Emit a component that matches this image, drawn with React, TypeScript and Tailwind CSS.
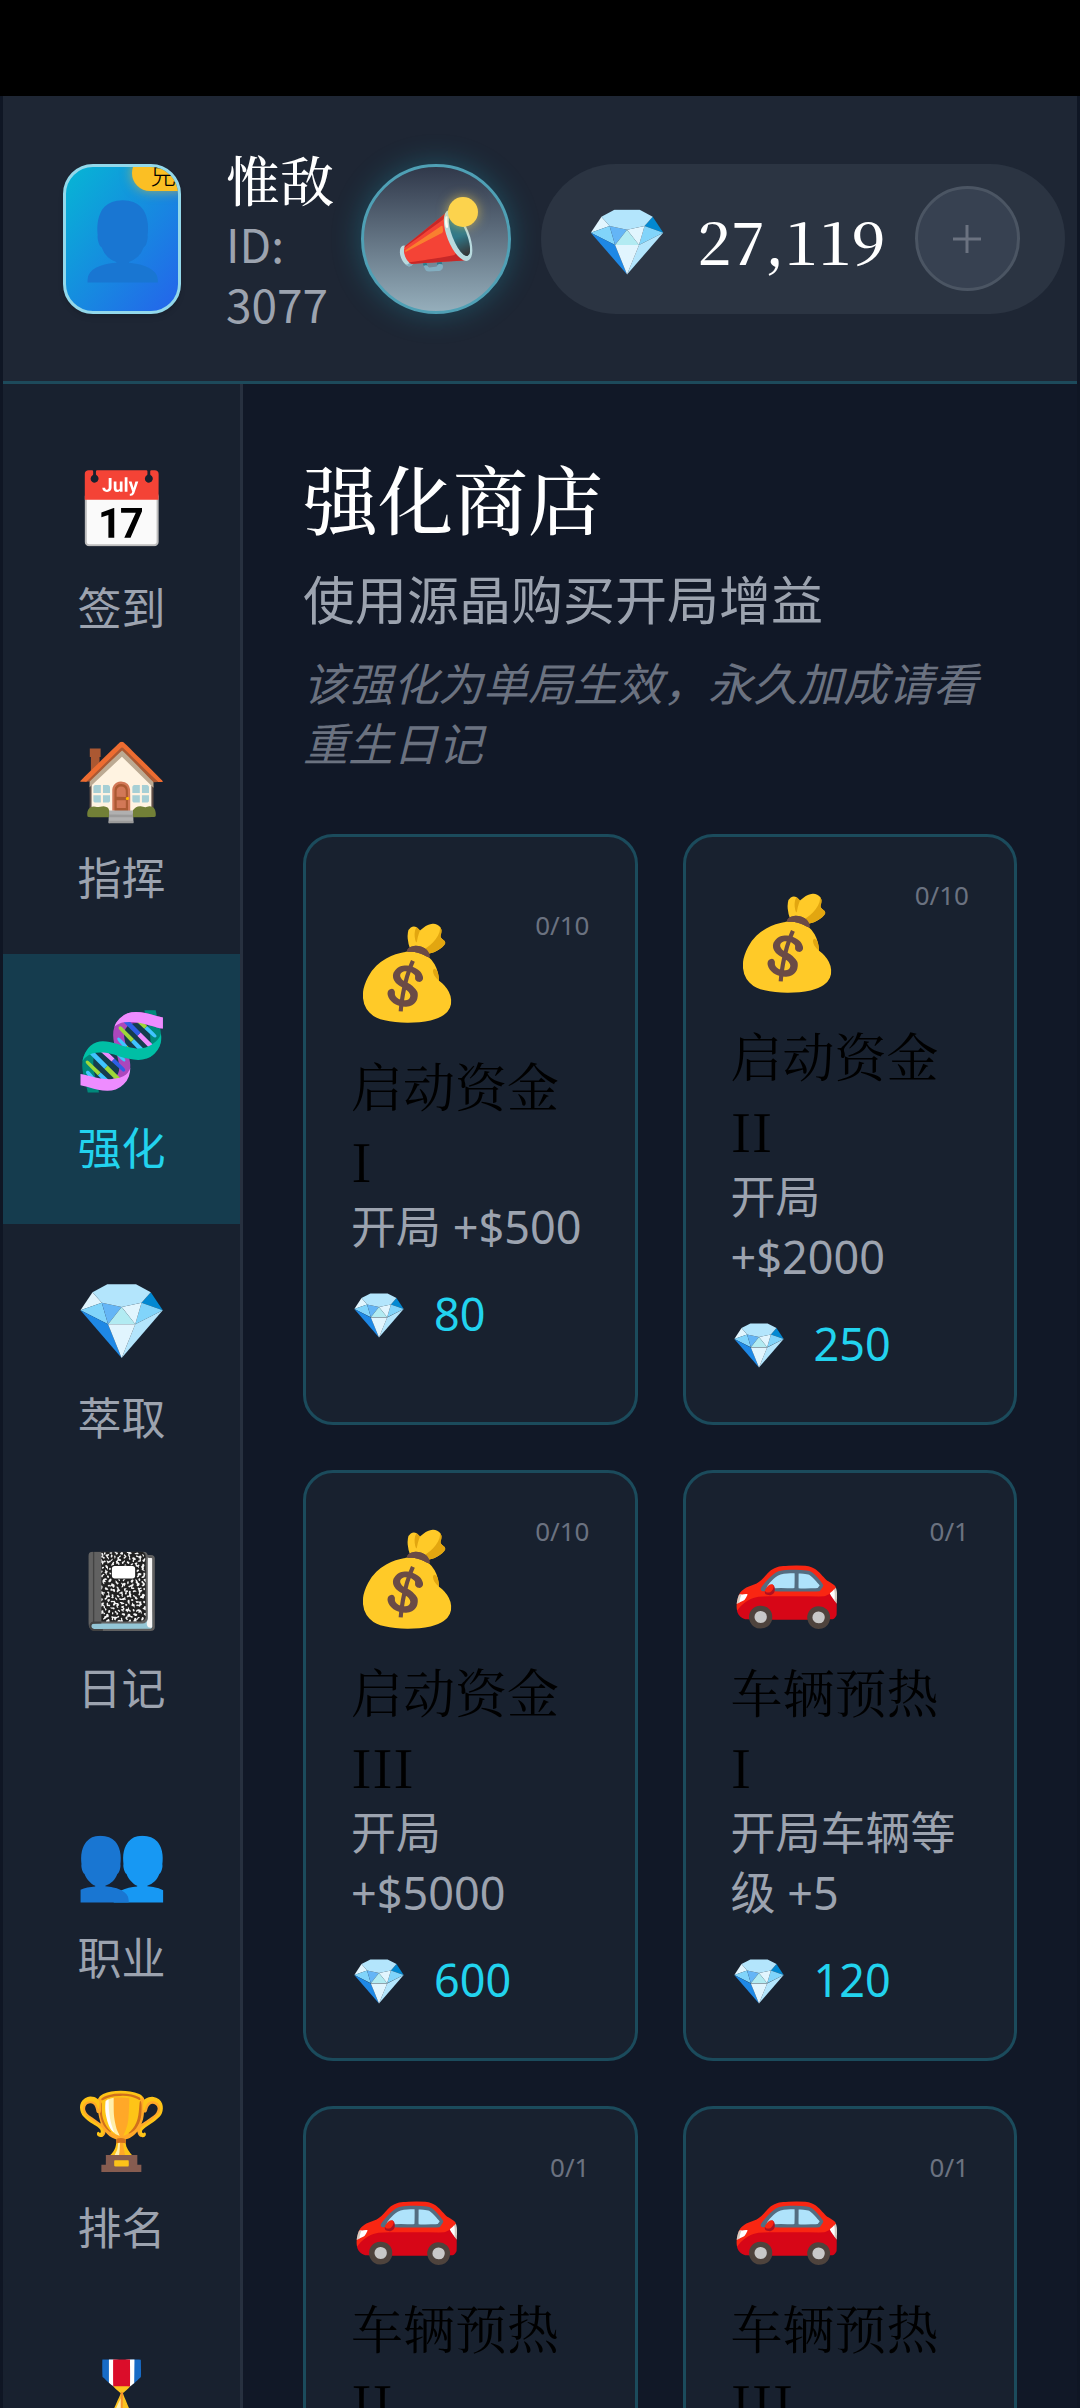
import React, { useState } from "react";

const navItems = [
  { key: "checkin", icon: "📅", label: "签到" },
  { key: "home", icon: "🏠", label: "指挥" },
  { key: "boost", icon: "🧬", label: "强化" },
  { key: "extract", icon: "💎", label: "萃取" },
  { key: "diary", icon: "📓", label: "日记" },
  { key: "job", icon: "👥", label: "职业" },
  { key: "rank", icon: "🏆", label: "排名" },
  { key: "honor", icon: "🎖️", label: "荣誉" },
];

const shopItems = [
  { icon: "💰", name: "启动资金 I", desc: "开局 +$500", price: 80, limit: "0/10" },
  { icon: "💰", name: "启动资金 II", desc: "开局 +$2000", price: 250, limit: "0/10" },
  { icon: "💰", name: "启动资金 III", desc: "开局 +$5000", price: 600, limit: "0/10" },
  { icon: "🚗", name: "车辆预热 I", desc: "开局车辆等级 +5", price: 120, limit: "0/1" },
  { icon: "🚗", name: "车辆预热 II", desc: "开局车辆等级 +10", price: 240, limit: "0/1" },
  { icon: "🚗", name: "车辆预热 III", desc: "开局车辆等级 +20", price: 480, limit: "0/1" },
];

const Header: React.FC = () => (
  <header className="flex h-72 shrink-0 items-center border-b-[3px] border-[#1d4a5b] bg-[#1e2634] pr-3 pl-[60px]">
    {/* Avatar */}
    <button
      aria-label="头像"
      className="relative flex h-[150px] w-[118px] shrink-0 items-center justify-center overflow-hidden rounded-[30px] border-[3px] border-[#93d8ea] bg-linear-to-br/srgb from-[#06b6d4] to-[#2563eb] text-[75px] leading-none shadow-md"
    >
      👤
      <span className="absolute -top-3 -right-4 rounded-[18px] bg-[#fbbf24] px-[18px] py-0.5 font-['Noto_Sans_CJK_SC',sans-serif] text-[26px] leading-8 font-light whitespace-nowrap text-black shadow-[0_0_12px_rgba(251,191,36,0.6)]">
        兑
      </span>
    </button>

    {/* Player */}
    <div className="ml-[45px] w-[105px] shrink-0">
      <div className="font-['Noto_Serif_CJK_SC',serif] text-[54px] leading-[69px] font-medium whitespace-nowrap text-white">
        惟敌
      </div>
      <div className="font-['Noto_Sans_CJK_SC',sans-serif] text-[46px] leading-[60px] text-[#9ca3af]">
        ID: 3077
      </div>
    </div>

    {/* Announcements */}
    <button
      aria-label="公告"
      className="relative ml-[30px] flex size-[150px] shrink-0 items-center justify-center rounded-full border-[3px] border-[#4fa0b5] bg-linear-to-b/srgb from-[#30384a] to-[#95aebb] text-[66px] leading-none shadow-[0_0_30px_rgba(34,211,238,0.25)]"
    >
      📣
      <span className="absolute top-[30px] right-[30px] size-[30px] rounded-full bg-[#fcd34d] shadow-[0_0_12px_rgba(252,211,77,0.6)]" />
    </button>

    {/* Balance */}
    <div className="ml-[30px] flex h-[150px] grow items-center justify-between rounded-full bg-[#2b3442] px-[45px]">
      <span className="text-[66px] leading-none">💎</span>
      <span className="font-['Noto_Serif_CJK_SC',serif] text-[60px] leading-[90px] font-medium text-white">
        27,119
      </span>
      <button
        aria-label="充值"
        className="flex size-[105px] items-center justify-center rounded-full border-[3px] border-[#4b5563] bg-[#374151] text-[#6b7280]"
      >
        <svg viewBox="0 0 28 28" className="size-7" stroke="currentColor" strokeWidth="3">
          <path d="M14 0v28M0 14h28" />
        </svg>
      </button>
    </div>
  </header>
);

const App: React.FC = () => {
  const [active, setActive] = useState<string>("boost");

  return (
    <div className="flex h-screen flex-col overflow-hidden bg-[#0f1624] font-['Noto_Sans','Noto_Sans_CJK_SC',sans-serif]">
      {/* Status bar */}
      <div className="h-24 shrink-0 bg-black" />

      <div className="mx-[3px] flex min-h-0 flex-1 flex-col bg-[#111827]">
        <Header />

        <div className="flex min-h-0 flex-1">
          {/* Sidebar */}
          <nav className="w-60 shrink-0 overflow-hidden border-r-[3px] border-[#27303f] bg-[#18212f] pt-[30px]">
            {navItems.map((item) => (
              <button
                key={item.key}
                onClick={() => setActive(item.key)}
                className={`flex h-[270px] w-full flex-col items-center pt-[42px] ${
                  active === item.key
                    ? "bg-[#153c4e] text-[#22d3ee]"
                    : "text-[#9ca3af]"
                }`}
              >
                <span className="text-[75px] leading-[105px]">{item.icon}</span>
                <span className="mt-3 font-['Noto_Sans_CJK_SC',sans-serif] text-[44px] leading-[66px]">
                  {item.label}
                </span>
              </button>
            ))}
          </nav>

          {/* Shop */}
          <main className="min-w-0 flex-1 overflow-hidden px-[60px] pt-[60px]">
            <h1 className="font-['Noto_Serif_CJK_SC',serif] text-[75px] leading-[106px] font-medium text-white">
              强化商店
            </h1>
            <p className="mt-2.5 text-[52px] leading-[80px] text-[#9ca3af]">
              使用源晶购买开局增益
            </p>
            <p className="mt-3.5 text-[45px] leading-[60px] text-[#6b7280] italic">
              该强化为单局生效，永久加成请看重生日记
            </p>

            <div className="mt-[60px] grid grid-cols-2 gap-[45px]">
              {shopItems.map((item) => (
                <button
                  key={item.name}
                  className="flex flex-col justify-center rounded-[30px] border-[3px] border-[#1b4b5c] bg-[#18212f] p-[45px] text-left"
                >
                  <span className="flex h-[135px] w-full items-start justify-between">
                    <span className="text-[90px] leading-[114px]">{item.icon}</span>
                    <span className="text-[26px] leading-[26px] text-[#6b7280]">
                      {item.limit}
                    </span>
                  </span>
                  <span className="font-['Noto_Serif_CJK_SC',serif] text-[52px] leading-[75px] text-black">
                    {item.name}
                  </span>
                  <span className="text-[45px] leading-[60px] text-[#9ca3af]">
                    {item.desc}
                  </span>
                  <span className="mt-[27px] mb-[3px] flex h-[60px] items-center gap-[27px] text-[45px] leading-[60px] text-[#22d3ee]">
                    <span>💎</span>
                    {item.price}
                  </span>
                </button>
              ))}
            </div>
          </main>
        </div>
      </div>
    </div>
  );
};

export default App;
